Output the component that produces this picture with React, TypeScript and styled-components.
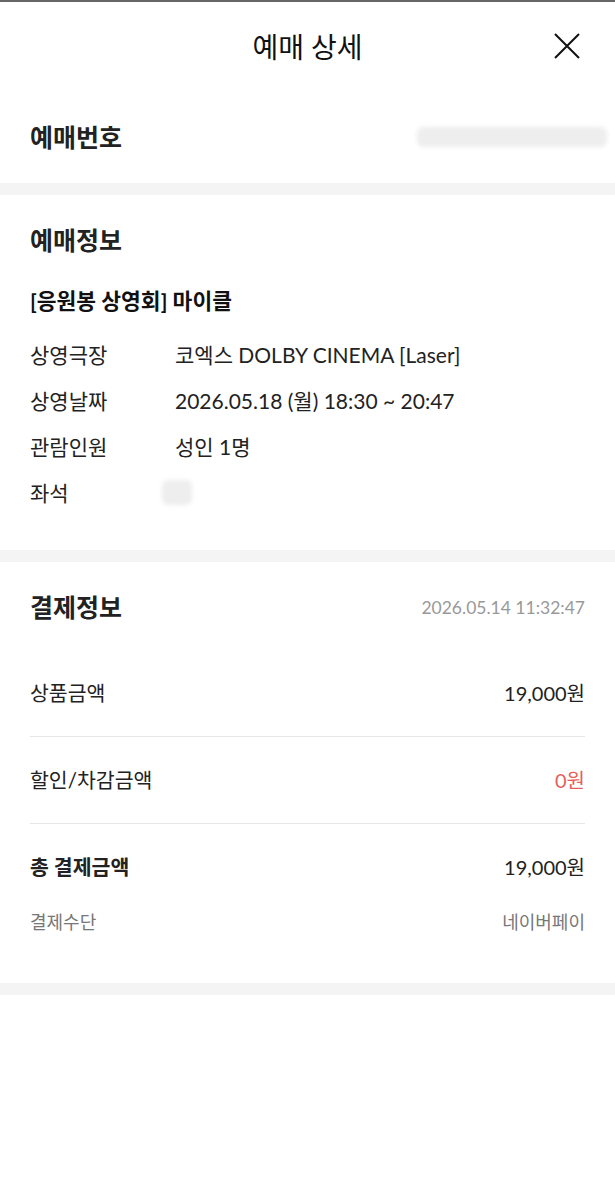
import styled, { createGlobalStyle } from "styled-components";

const GlobalStyle = createGlobalStyle`
    body {
        margin: 0;
        background: #fff;
        font-family: "Lato", "Noto Sans CJK KR", sans-serif;
        color: #222;
    }
`;

const Page = styled.div`
    width: 615px;
    min-height: 1200px;
    border-top: 2px solid #666;
    box-sizing: border-box;
`;

const Header = styled.header`
    display: grid;
    grid-template-columns: 1fr auto 1fr;
    align-items: center;
    height: 88px;
`;

const Title = styled.h1`
    grid-column: 2;
    margin: 0;
    font-size: 28px;
    font-weight: 400;
    color: #111;
`;

const CloseBtn = styled.button`
    justify-self: end;
    margin-right: 34px;
    width: 28px;
    height: 28px;
    padding: 0;
    border: 0;
    background: none;
    cursor: pointer;
    display: flex;
`;

const Divider = styled.div`
    height: 12px;
    background: #f4f4f4;
`;

const Section = styled.section<{ $top?: number; $bottom?: number }>`
    padding: ${(p) => p.$top ?? 30}px 30px ${(p) => p.$bottom ?? 35}px;
`;

const HeadRow = styled.div`
    display: flex;
    justify-content: space-between;
    align-items: center;
    height: 93px;
    padding: 0 30px;
`;

const Heading = styled.h2`
    margin: 0;
    font-size: 25px;
    line-height: 30px;
    font-weight: 700;
    color: #222;
`;

const Masked = styled.div<{ $w: number; $h: number }>`
    width: ${(p) => p.$w}px;
    height: ${(p) => p.$h}px;
    background: #eeeeee;
    border-radius: 6px;
    filter: blur(2px);
`;

const NumberMask = styled(Masked)`
    margin-right: -22px;
`;

const MovieTitle = styled.div`
    margin-top: 31px;
    font-size: 21.5px;
    line-height: 30px;
    font-weight: 700;
    color: #111;
`;

const InfoList = styled.div`
    margin-top: 15px;
    display: grid;
    grid-template-columns: 145px 1fr;
    grid-auto-rows: 46px;
    align-items: center;
    font-size: 21px;
    color: #222;
`;

const SeatMask = styled(Masked)`
    margin-left: -13px;
`;

const PayHead = styled.div`
    display: flex;
    justify-content: space-between;
    align-items: center;
`;

const PayDate = styled.span`
    font-size: 17.5px;
    color: #999;
`;

const PayList = styled.div`
    margin-top: 28px;
`;

const PayRow = styled.div<{ $bold?: boolean }>`
    display: flex;
    justify-content: space-between;
    align-items: center;
    padding: 28px 0;
    line-height: 30px;
    font-size: 20.5px;
    border-bottom: 1px solid #e6e6e6;
    font-weight: ${(p) => (p.$bold ? 700 : 400)};
    &:last-of-type {
        border-bottom: 0;
    }
`;

const Amount = styled.span<{ $red?: boolean }>`
    font-size: 20px;
    font-weight: 400;
    color: ${(p) => (p.$red ? "#e45f5b" : "#222")};
`;

const MethodRow = styled.div`
    display: flex;
    justify-content: space-between;
    font-size: 18px;
    line-height: 24px;
    color: #777;
`;

const info = [
    ["상영극장", "코엑스 DOLBY CINEMA [Laser]"],
    ["상영날짜", "2026.05.18 (월) 18:30 ~ 20:47"],
    ["관람인원", "성인 1명"],
];

export default function App() {
    return (
        <Page>
            <GlobalStyle />
            <Header>
                <Title>예매 상세</Title>
                <CloseBtn aria-label="닫기">
                    <svg width="28" height="28" viewBox="0 0 28 28">
                        <path d="M2 2 L26 26 M26 2 L2 26" stroke="#111" strokeWidth="2" fill="none" />
                    </svg>
                </CloseBtn>
            </Header>
            <HeadRow>
                <Heading>예매번호</Heading>
                <NumberMask $w={190} $h={20} />
            </HeadRow>
            <Divider />
            <Section>
                <Heading>예매정보</Heading>
                <MovieTitle>[응원봉 상영회] 마이클</MovieTitle>
                <InfoList>
                    {info.map(([label, value]) => [
                        <span key={label}>{label}</span>,
                        <span key={label + "v"}>{value}</span>,
                    ])}
                    <span>좌석</span>
                    <SeatMask $w={30} $h={25} />
                </InfoList>
            </Section>
            <Divider />
            <Section $bottom={49}>
                <PayHead>
                    <Heading>결제정보</Heading>
                    <PayDate>2026.05.14 11:32:47</PayDate>
                </PayHead>
                <PayList>
                    <PayRow>
                        <span>상품금액</span>
                        <Amount>19,000원</Amount>
                    </PayRow>
                    <PayRow>
                        <span>할인/차감금액</span>
                        <Amount $red>0원</Amount>
                    </PayRow>
                    <PayRow $bold>
                        <span>총 결제금액</span>
                        <Amount>19,000원</Amount>
                    </PayRow>
                </PayList>
                <MethodRow>
                    <span>결제수단</span>
                    <span>네이버페이</span>
                </MethodRow>
            </Section>
            <Divider />
        </Page>
    );
}
